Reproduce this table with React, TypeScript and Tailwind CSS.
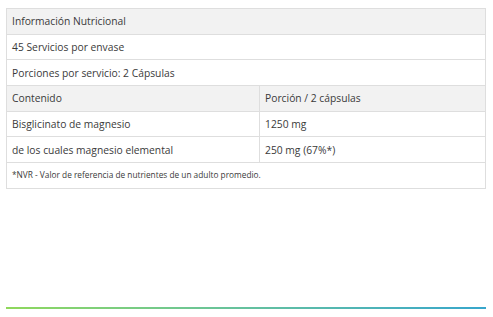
export default function App() {
  const cell = "border border-[#dedede] pl-[5px] pr-[5px] align-middle";
  return (
    <div
      className="w-[493px] h-[317px] bg-white relative text-[#3a3a3a]"
      style={{ fontFamily: '"Open Sans", sans-serif' }}
    >
      <div className="pt-[8px] px-[6px]">
        <table className="w-[480px] border-collapse text-[10.3px] leading-none">
          <tbody>
            <tr className="h-[25.7px] bg-[#f2f2f2]">
              <td colSpan={2} className={cell}>Información Nutricional</td>
            </tr>
            <tr className="h-[25.7px]">
              <td colSpan={2} className={cell}>45 Servicios por envase</td>
            </tr>
            <tr className="h-[25.7px]">
              <td colSpan={2} className={cell}>Porciones por servicio: 2 Cápsulas</td>
            </tr>
            <tr className="h-[25.7px] bg-[#f2f2f2]">
              <td className={cell + " w-[253px]"}>Contenido</td>
              <td className={cell}>Porción / 2 cápsulas</td>
            </tr>
            <tr className="h-[25.7px]">
              <td className={cell}>Bisglicinato de magnesio</td>
              <td className={cell}>1250 mg</td>
            </tr>
            <tr className="h-[25.7px]">
              <td className={cell}>de los cuales magnesio elemental</td>
              <td className={cell}>250 mg (67%*)</td>
            </tr>
            <tr className="h-[25.7px]">
              <td colSpan={2} className={cell + " text-[8.3px]"}>
                *NVR - Valor de referencia de nutrientes de un adulto promedio.
              </td>
            </tr>
          </tbody>
        </table>
      </div>
      <div className="absolute left-[6px] top-[307px] w-[480px] h-[2px] bg-gradient-to-r from-[#8fd85a] to-[#37a6cc]" />
    </div>
  );
}
